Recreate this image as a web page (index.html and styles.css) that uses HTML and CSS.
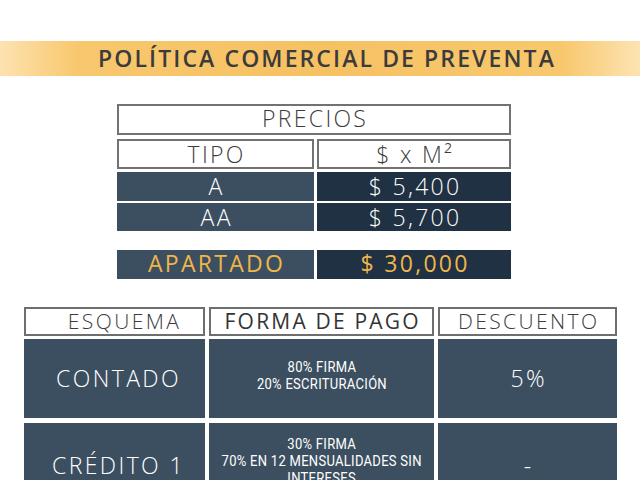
FILE: index.html
```html
<!DOCTYPE html>
<html lang="es">
<head>
<meta charset="utf-8">
<title>Política comercial de preventa</title>
<link rel="stylesheet" href="styles.css">
</head>
<body>
<header class="banner"><h1 class="banner-title">POLÍTICA COMERCIAL DE PREVENTA</h1></header>

<section class="prices">
  <div class="cell cell-outline cell-full">PRECIOS</div>
  <div class="row row-head">
    <div class="cell cell-outline">TIPO</div>
    <div class="cell cell-outline">$ x M²</div>
  </div>
  <div class="row row-a">
    <div class="cell cell-slate">A</div>
    <div class="cell cell-navy">$ 5,400</div>
  </div>
  <div class="row row-aa">
    <div class="cell cell-slate">AA</div>
    <div class="cell cell-navy">$ 5,700</div>
  </div>
  <div class="row row-apartado">
    <div class="cell cell-slate gold">APARTADO</div>
    <div class="cell cell-navy gold">$ 30,000</div>
  </div>
</section>

<section class="scheme">
  <div class="s-head s-head-first">ESQUEMA</div>
  <div class="s-head s-head-strong">FORMA DE PAGO</div>
  <div class="s-head">DESCUENTO</div>

  <div class="s-cell s-big s-left">CONTADO</div>
  <div class="s-cell s-small s-first"><span class="s-text">80% FIRMA<br>20% ESCRITURACIÓN</span></div>
  <div class="s-cell s-big">5%</div>

  <div class="s-cell s-big s-left s-second">CRÉDITO 1</div>
  <div class="s-cell s-small s-second"><span class="s-text">30% FIRMA<br>70% EN 12 MENSUALIDADES SIN<br>INTERESES</span></div>
  <div class="s-cell s-big s-second">-</div>
</section>
</body>
</html>
```
FILE: styles.css
```css
html, body {
  margin: 0;
  padding: 0;
  background: #ffffff;
  overflow: hidden;
}
body {
  width: 640px;
  height: 480px;
  font-family: "Open Sans", "DejaVu Sans", sans-serif;
  color: #3d3d3d;
}

.banner {
  margin-top: 41px;
  height: 35px;
  background: linear-gradient(90deg, #fde2b0 0%, #f8c86e 12%, #f6c163 50%, #f8c86e 88%, #fde3b3 100%);
  display: flex;
  align-items: center;
  justify-content: center;
}
.banner-title {
  margin: 0 0 0 14px;
  font-size: 23px;
  font-weight: 600;
  letter-spacing: 2.1px;
  color: #3b3b3b;
  line-height: 1;
}

.prices {
  margin: 28px 0 0 117px;
  width: 394px;
  display: flex;
  flex-direction: column;
}
.row {
  display: grid;
  grid-template-columns: 197px 194px;
  column-gap: 3px;
}
.row-head { margin-top: 4px; height: 30px; }
.row-a { margin-top: 3px; height: 29px; }
.row-aa { margin-top: 2px; height: 28px; }
.row-apartado { margin-top: 19px; height: 29px; }

.cell {
  display: flex;
  align-items: center;
  justify-content: center;
  font-size: 23px;
  font-weight: 300;
  letter-spacing: 2.3px;
  padding-left: 2.3px;
  line-height: 1;
  box-sizing: border-box;
}
.cell-full { height: 31px; padding-bottom: 3px; }
.cell-outline {
  border: 2px solid #727272;
  color: #3d3d3d;
  background: #ffffff;
}
.cell-slate { background: #3c4f60; color: #ffffff; }
.cell-navy { background: #1f3142; color: #ffffff; }
.gold { color: #f1b54a; font-weight: 400; padding-bottom: 3px; }

.scheme {
  margin: 28px 0 0 24px;
  display: grid;
  grid-template-columns: 181px 225px 179px;
  grid-template-rows: 29px 79px 79px;
  column-gap: 4px;
  row-gap: 3px;
}
.s-head {
  border: 2px solid #6e6e6e;
  box-sizing: border-box;
  display: flex;
  align-items: center;
  justify-content: center;
  font-size: 21px;
  font-weight: 300;
  letter-spacing: 2.4px;
  padding-left: 2.4px;
  color: #3d3d3d;
  line-height: 1;
}
.s-head-first { padding-left: 20px; }
.s-head-strong { font-weight: 500; color: #333333; letter-spacing: 2.2px; }
.s-cell {
  background: #3c4f60;
  color: #ffffff;
  display: flex;
  align-items: center;
  justify-content: center;
  text-align: center;
}
.s-second { margin-top: 2px; }
.s-big {
  font-size: 23px;
  font-weight: 300;
  letter-spacing: 2.4px;
  padding-left: 2.4px;
  line-height: 1;
}
.s-left { padding-left: 8px; }
.s-big.s-second { padding-top: 8px; }
.s-small {
  font-family: "Roboto", "Liberation Sans", sans-serif;
  font-size: 14px;
  line-height: 17px;
}
.s-first { padding-bottom: 6px; }
.s-text {
  display: inline-block;
  transform: scaleX(0.93);
  letter-spacing: 0.3px;
  white-space: nowrap;
}
```
